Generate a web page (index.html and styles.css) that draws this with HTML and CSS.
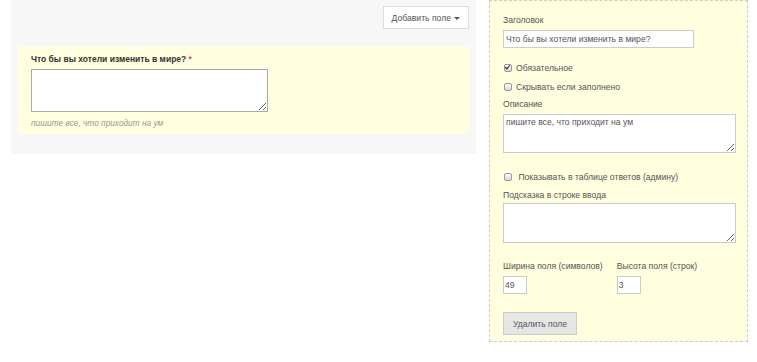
FILE: index.html
```html
<!DOCTYPE html>
<html lang="ru">
<head>
    <meta charset="UTF-8">
    <title>Редактор формы</title>
    <link rel="stylesheet" href="styles.css">
</head>
<body>
    <div class="page">
        <div class="preview">
            <div class="toolbar">
                <button class="add-btn">Добавить поле <span class="caret"></span></button>
            </div>
            <div class="field">
                <div class="field-label">Что бы вы хотели изменить в мире? <span class="req">*</span></div>
                <textarea class="field-input"></textarea>
                <div class="field-help">пишите все, что приходит на ум</div>
            </div>
        </div>

        <div class="editor">
            <label class="lbl first">Заголовок</label>
            <input type="text" class="title-input" value="Что бы вы хотели изменить в мире?">

            <label class="check req-check"><input type="checkbox" checked> Обязательное</label>
            <label class="check hide-check"><input type="checkbox"> Скрывать если заполнено</label>

            <label class="lbl desc-lbl">Описание</label>
            <textarea class="area">пишите все, что приходит на ум</textarea>

            <label class="check show-check"><input type="checkbox"> &nbsp;Показывать в таблице ответов (админу)</label>

            <label class="lbl hint-lbl">Подсказка в строке ввода</label>
            <textarea class="area hint-area"></textarea>

            <div class="sizes">
                <div class="size">
                    <label class="lbl">Ширина поля (символов)</label>
                    <input type="text" class="num" value="49">
                </div>
                <div class="size">
                    <label class="lbl">Высота поля (строк)</label>
                    <input type="text" class="num" value="3">
                </div>
            </div>

            <button class="delete-btn">Удалить поле</button>
        </div>
    </div>
</body>
</html>
```

FILE: styles.css
```css
body {
    margin: 0;
    font-family: "Liberation Sans", Arial, sans-serif;
    font-size: 8.6px;
    color: #555;
    background: #fff;
}
.page {
    display: flex;
    align-items: flex-start;
}
.preview {
    margin-left: 11px;
    width: 465px;
    background-color: #f7f7f7;
    padding-bottom: 20px;
}
.toolbar {
    display: flex;
    justify-content: flex-end;
    padding: 6px 7px 0 0;
    height: 40px;
}
.add-btn {
    height: 23px;
    width: 86px;
    padding: 0;
    border: 1px solid #ddd;
    border-radius: 0;
    background: #fff;
    color: #555;
    font-family: inherit;
    font-size: 8.6px;
}
.caret {
    display: inline-block;
    width: 0;
    height: 0;
    margin-left: 1px;
    vertical-align: 1px;
    border-top: 3px solid #555;
    border-left: 3px solid transparent;
    border-right: 3px solid transparent;
}
.field {
    margin: 0 7px;
    background-color: #ffffe0;
    padding: 6px 13px 4px;
}
.field-label {
    font-weight: bold;
    font-size: 8.5px;
    color: #333;
    line-height: 14px;
    height: 17px;
}
.req {
    color: #d9534f;
}
.field-input {
    display: block;
    box-sizing: border-box;
    width: 237px;
    height: 43px;
    margin: 0;
    border: 1px solid #aaa;
    background: #fff;
}
.field-help {
    margin-top: 4px;
    line-height: 14px;
    font-style: italic;
    font-size: 8.3px;
    color: #999;
}
.editor {
    box-sizing: border-box;
    margin-left: 13px;
    width: 259px;
    height: 342px;
    background-color: #ffffe0;
    border: 1px dashed #ccc;
    padding: 12px 13px 0 13px;
}
.lbl {
    display: block;
    line-height: 14px;
    color: #555;
}
.title-input {
    display: block;
    box-sizing: border-box;
    width: 191px;
    height: 18px;
    margin: 3px 0 0;
    padding: 0 2px;
    border: 1px solid #ccc;
    font-family: inherit;
    font-size: 8.6px;
    color: #555;
}
.check {
    display: flex;
    align-items: center;
    line-height: 14px;
    color: #555;
}
.check input {
    appearance: none;
    -webkit-appearance: none;
    position: relative;
    box-sizing: border-box;
    width: 8px;
    height: 8px;
    margin: 0 4px 0 1px;
    border: 1px solid #999;
    border-radius: 2px;
    background: linear-gradient(#fdfdfd, #d8d8d8);
}
.check input:checked::after {
    content: "";
    position: absolute;
    left: 1px;
    top: -1px;
    width: 2px;
    height: 4px;
    border-right: 1.5px solid #222;
    border-bottom: 1.5px solid #222;
    transform: rotate(40deg);
}
.req-check {
    margin-top: 13px;
}
.hide-check {
    margin-top: 5px;
}
.desc-lbl {
    margin-top: 3px;
}
.area {
    display: block;
    box-sizing: border-box;
    width: 233px;
    height: 39px;
    margin: 3px 0 0;
    padding: 2px;
    border: 1px solid #ccc;
    font-family: inherit;
    font-size: 8.6px;
    color: #555;
    background: #fff;
}
.show-check {
    margin-top: 17px;
}
.hint-lbl {
    margin-top: 4px;
}
.hint-area {
    height: 40px;
    margin-top: 1px;
}
.sizes {
    display: flex;
    gap: 14px;
    margin-top: 16px;
}
.num {
    display: block;
    box-sizing: border-box;
    width: 24px;
    height: 18px;
    margin: 3px 0 0;
    padding: 0 1px;
    border: 1px solid #ccc;
    font-family: inherit;
    font-size: 8.6px;
    color: #555;
}
.delete-btn {
    display: block;
    margin-top: 18px;
    width: 74px;
    height: 23px;
    padding: 0;
    border: 1px solid #ccc;
    border-radius: 0;
    background: #e6e6e6;
    color: #555;
    font-family: inherit;
    font-size: 8.6px;
}
```
